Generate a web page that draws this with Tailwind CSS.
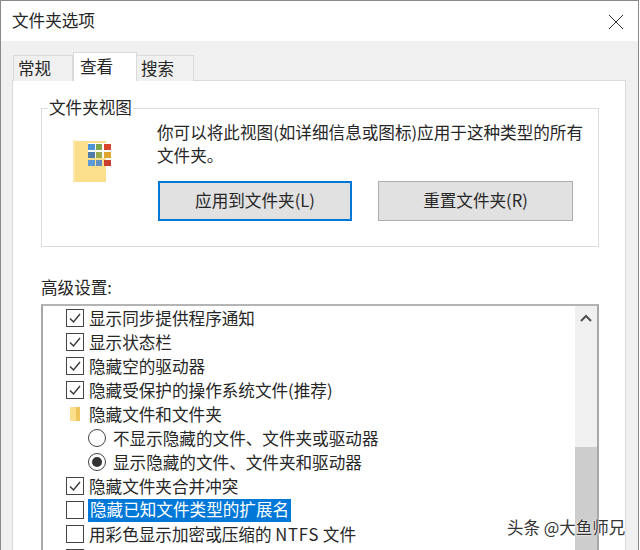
<!DOCTYPE html>
<html lang="zh">
<head>
<meta charset="utf-8">
<script src="https://cdn.jsdelivr.net/npm/@tailwindcss/browser@4"></script>
</head>
<body class="m-0">
<div class="relative w-[640px] h-[550px] overflow-hidden bg-white font-['Noto_Sans_CJK_SC','Liberation_Sans',sans-serif] text-[16.6px] text-[#262626]">
  <div class="h-full w-[639px] border-t border-l border-r border-[#8a8a8a] flex flex-col">
    <div class="h-10 shrink-0 bg-white flex items-center justify-between pl-[11px] pr-[14px]">
      <span class="leading-6 relative -top-[1px]">文件夹选项</span>
      <svg width="16" height="16" viewBox="0 0 16 16" class="relative top-[1px]"><path d="M1 1L15 15M15 1L1 15" stroke="#333" stroke-width="1" fill="none"/></svg>
    </div>
    <div class="flex-1 bg-[#f0f0f0] px-[11px] pt-[12px] flex flex-col min-h-0">
      <div class="flex h-[28px] items-end pl-[1px] shrink-0 relative z-10 -mb-px">
        <div class="w-[60px] h-[26px] bg-[#f0f0f0] border border-b-0 border-[#dadada] flex items-center pl-[4px] pb-[2px] leading-6">常规</div>
        <div class="w-[64px] h-[29px] bg-white border border-b-0 border-[#dadada] flex items-start pt-[1px] pl-[6px] leading-6">查看</div>
        <div class="w-[57px] h-[26px] bg-[#f0f0f0] border border-b-0 border-l-0 border-[#dadada] flex items-center pl-[4px] pb-[2px] leading-6">搜索</div>
      </div>
      <div class="flex-1 bg-white border border-[#dadada] border-b-0 w-[614px] pl-[28px] pr-[26px] pt-[27px] min-h-0">
        <div class="relative h-[139px] border border-[#dcdcdc] flex">
          <span class="absolute left-[6px] -top-[14px] bg-white px-px leading-6">文件夹视图</span>
          <div class="w-[115px] shrink-0 pl-[31px] pt-[31px]">
            <svg width="40" height="42" viewBox="0 0 40 42">
              <rect x="1" y="1" width="32" height="41" fill="#fbdf8c"/>
              <rect x="0" y="0" width="2" height="42" fill="#fde9ab"/>
              <path d="M15 3H40V27H33V18H15Z" fill="#fff"/>
              <g>
                <rect x="15" y="4" width="7" height="6" fill="#4c94d8"/><rect x="23" y="4" width="6" height="6" fill="#7fa54d"/><rect x="31" y="4" width="7" height="6" fill="#d6452c"/>
                <rect x="15" y="12" width="7" height="6" fill="#4f7cab"/><rect x="23" y="12" width="6" height="6" fill="#9aac4c"/><rect x="31" y="12" width="7" height="6" fill="#e0a52e"/>
                <rect x="15" y="20" width="7" height="6" fill="#5d9ad9"/><rect x="23" y="20" width="6" height="6" fill="#5f8fc2"/><rect x="31" y="20" width="7" height="6" fill="#c9402c"/>
              </g>
            </svg>
          </div>
          <div class="flex-1 pt-[12px]">
            <p class="leading-[23px] whitespace-nowrap">你可以将此视图(如详细信息或图标)应用于这种类型的所有<br>文件夹。</p>
            <div class="flex gap-[26px] mt-[14px] ml-px">
              <button class="w-[194px] h-[40px] bg-[#e1e1e1] border-2 border-[#0078d7] leading-6 pb-[2px]">应用到文件夹(L)</button>
              <button class="w-[195px] h-[40px] bg-[#e1e1e1] border border-[#adadad] leading-6 pb-[2px]">重置文件夹(R)</button>
            </div>
          </div>
        </div>
        <div class="leading-6 mt-[28px] h-[29px]">高级设置:</div>
        <div class="h-[400px] border-t-2 border-x-2 border-[#a8a8a8] border-t-[#b4b4b4] flex">
          <div class="flex-1 min-w-0 pl-[23px]">
            <div class="flex items-center h-6 gap-[5px]"><span class="w-[18px] h-[18px] border border-[#444] shrink-0 flex items-center justify-center"><svg width="14" height="14" viewBox="0 0 14 14"><path d="M2 7.5L5.5 11L12 3" stroke="#333" stroke-width="1.3" fill="none"/></svg></span><span class="leading-6">显示同步提供程序通知</span></div>
            <div class="flex items-center h-6 gap-[5px]"><span class="w-[18px] h-[18px] border border-[#444] shrink-0 flex items-center justify-center"><svg width="14" height="14" viewBox="0 0 14 14"><path d="M2 7.5L5.5 11L12 3" stroke="#333" stroke-width="1.3" fill="none"/></svg></span><span class="leading-6">显示状态栏</span></div>
            <div class="flex items-center h-6 gap-[5px]"><span class="w-[18px] h-[18px] border border-[#444] shrink-0 flex items-center justify-center"><svg width="14" height="14" viewBox="0 0 14 14"><path d="M2 7.5L5.5 11L12 3" stroke="#333" stroke-width="1.3" fill="none"/></svg></span><span class="leading-6">隐藏空的驱动器</span></div>
            <div class="flex items-center h-6 gap-[5px]"><span class="w-[18px] h-[18px] border border-[#444] shrink-0 flex items-center justify-center"><svg width="14" height="14" viewBox="0 0 14 14"><path d="M2 7.5L5.5 11L12 3" stroke="#333" stroke-width="1.3" fill="none"/></svg></span><span class="leading-6">隐藏受保护的操作系统文件(推荐)</span></div>
            <div class="flex items-center h-6 gap-[5px]"><span class="w-[18px] h-[18px] shrink-0 flex items-center justify-center"><svg width="12" height="16" viewBox="0 0 12 16"><rect x="1" y="1" width="10" height="14" fill="#fbdf8c"/><rect x="7" y="1" width="4" height="14" fill="#f0c45c"/></svg></span><span class="leading-6">隐藏文件和文件夹</span></div>
            <div class="flex items-center h-6 gap-[7px] pl-[22px]"><span class="w-[18px] h-[18px] border border-[#444] rounded-full shrink-0 bg-white"></span><span class="leading-6">不显示隐藏的文件、文件夹或驱动器</span></div>
            <div class="flex items-center h-6 gap-[7px] pl-[22px]"><span class="w-[18px] h-[18px] border border-[#444] rounded-full shrink-0 flex items-center justify-center"><span class="w-[10px] h-[10px] rounded-full bg-[#333]"></span></span><span class="leading-6">显示隐藏的文件、文件夹和驱动器</span></div>
            <div class="flex items-center h-6 gap-[5px]"><span class="w-[18px] h-[18px] border border-[#444] shrink-0 flex items-center justify-center"><svg width="14" height="14" viewBox="0 0 14 14"><path d="M2 7.5L5.5 11L12 3" stroke="#333" stroke-width="1.3" fill="none"/></svg></span><span class="leading-6">隐藏文件夹合并冲突</span></div>
            <div class="flex items-center h-6 gap-[3px]"><span class="w-[18px] h-[18px] border border-[#444] shrink-0 mr-[1px]"></span><span class="leading-[21px] h-[23px] bg-[#0078d7] text-white pl-[2px] pr-[2px]">隐藏已知文件类型的扩展名</span></div>
            <div class="flex items-center h-6 gap-[5px]"><span class="w-[18px] h-[18px] border border-[#444] shrink-0"></span><span class="leading-6">用彩色显示加密或压缩的 <span class="tracking-[0.8px]">NTFS</span> 文件</span></div>
            <div class="flex items-center h-6 gap-[5px]"><span class="w-[18px] h-[18px] border border-[#444] shrink-0"></span></div>
          </div>
          <div class="w-[22px] shrink-0 bg-[#f0f0f0] flex flex-col">
            <div class="h-[22px] flex items-center justify-center pt-[1px]"><svg width="12" height="8" viewBox="0 0 12 8"><path d="M1 7L6 2L11 7" stroke="#505050" stroke-width="2" fill="none"/></svg></div>
            <div class="h-[119px]"></div>
            <div class="flex-1 bg-[#cdcdcd]"></div>
          </div>
        </div>
      </div>
    </div>
  </div>
  <div class="absolute left-[507px] top-[517px] text-[16.5px] leading-5 text-[#333] [text-shadow:0_0_2px_#fff,0_0_2px_#fff]">头条 @大鱼师兄</div>
</div>
</body>
</html>
